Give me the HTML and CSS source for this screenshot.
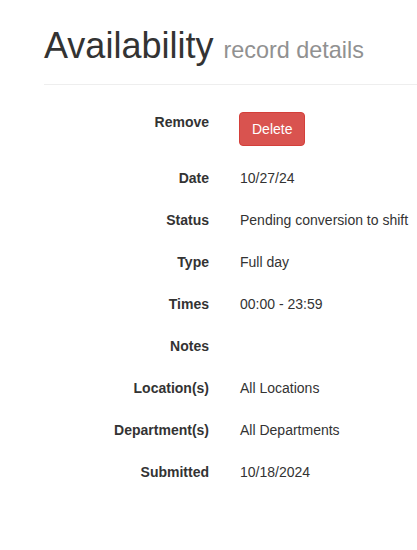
FILE: index.html
```html
<!DOCTYPE html>
<html>
<head>
<meta charset="utf-8">
<link rel="stylesheet" href="styles.css">
</head>
<body>
<div class="page">
  <div class="page-header">
    <h1>Availability <small>record details</small></h1>
  </div>
  <div class="details">
    <div class="label">Remove</div>
    <div class="value"><button class="btn-danger" type="button">Delete</button></div>
    <div class="label">Date</div>
    <div class="value">10/27/24</div>
    <div class="label">Status</div>
    <div class="value">Pending conversion to shift</div>
    <div class="label">Type</div>
    <div class="value">Full day</div>
    <div class="label">Times</div>
    <div class="value">00:00 - 23:59</div>
    <div class="label">Notes</div>
    <div class="value"></div>
    <div class="label">Location(s)</div>
    <div class="value">All Locations</div>
    <div class="label">Department(s)</div>
    <div class="value">All Departments</div>
    <div class="label">Submitted</div>
    <div class="value">10/18/2024</div>
  </div>
</div>
</body>
</html>
```
FILE: styles.css
```css
html, body {
  margin: 0;
  padding: 0;
  background: #fff;
}
body {
  font-family: "Liberation Sans", Arial, Helvetica, sans-serif;
  font-size: 14px;
  line-height: 20px;
  color: #333;
}
.page {
  padding: 26px 0 0 44px;
}
.page-header {
  padding-bottom: 9px;
  border-bottom: 1px solid #eee;
}
.page-header h1 {
  margin: 0 0 9px 0;
  font-size: 36px;
  font-weight: 500;
  line-height: 1.1;
  color: #333;
}
.page-header h1 small {
  font-size: 65%;
  font-weight: 400;
  color: #919191;
}
.details {
  display: grid;
  grid-template-columns: 165px 1fr;
  column-gap: 31px;
  row-gap: 22px;
  margin-top: 27px;
}
.label {
  text-align: right;
  font-weight: bold;
}
.value {
  min-height: 20px;
  white-space: nowrap;
}
.btn-danger {
  display: block;
  margin-left: -1px;
  font-family: inherit;
  font-size: 14px;
  line-height: 20px;
  padding: 6px 12px;
  color: #fff;
  background: #d9534f;
  border: 1px solid #d43f3a;
  border-radius: 4px;
  cursor: pointer;
}
```
